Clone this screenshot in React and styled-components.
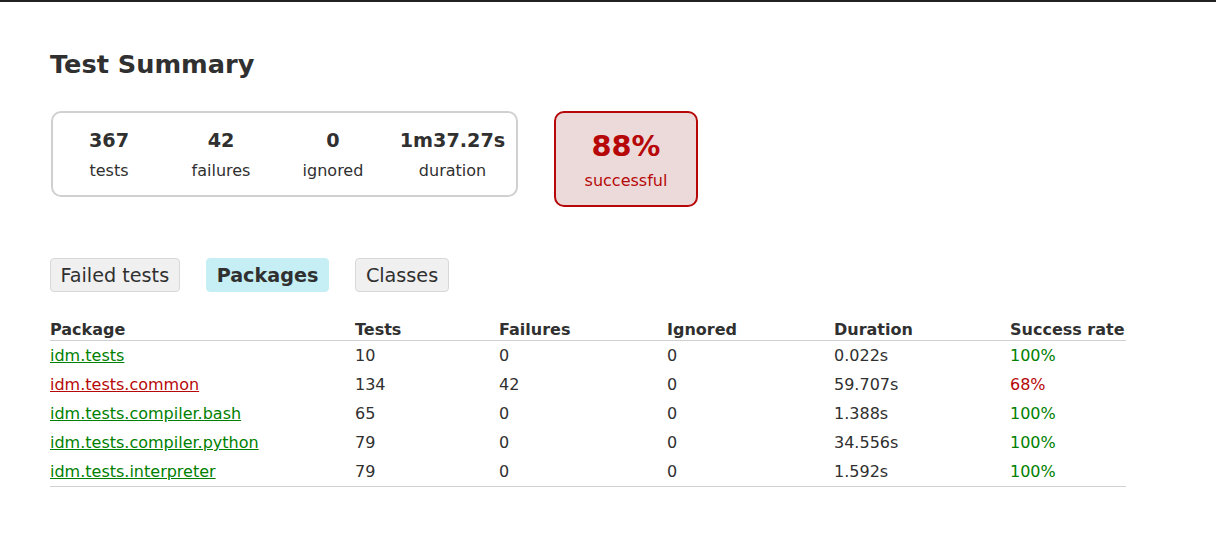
import styled, { createGlobalStyle } from 'styled-components';

const GlobalStyle = createGlobalStyle`
  html, body {
    margin: 0;
    padding: 0;
    background: #ffffff;
  }
  body {
    font-family: "DejaVu Sans", sans-serif;
    font-size: 16px;
    color: #303030;
  }
`;

const Page = styled.div`
  border-top: 2px solid #222222;
  padding: 30px 50px;
`;

const Title = styled.h1`
  font-size: 25.6px;
  font-weight: bold;
  margin: 17px 0 0;
  line-height: 30px;
`;

const SummaryRow = styled.div`
  display: flex;
  align-items: flex-start;
  margin: 32px 0 0 1px;
`;

const SummaryGroup = styled.div`
  display: flex;
  border: 2px solid #d0d0d0;
  border-radius: 10px;
`;

const InfoBox = styled.div`
  width: ${(p) => p.$width}px;
  padding: 17px 0 14px;
  text-align: center;
`;

const Counter = styled.p`
  margin: 0 0 10px;
  font-size: 19.2px;
  font-weight: bold;
  line-height: 22.4px;
`;

const Label = styled.p`
  margin: 0;
  line-height: 18.6px;
`;

const SuccessRate = styled.div`
  width: 140px;
  margin-left: 36px;
  padding: 17px 0 15px;
  text-align: center;
  border: 2px solid #b60808;
  border-radius: 10px;
  background: #ecdada;
  color: #b60808;
`;

const Percent = styled.p`
  margin: 0 0 8px;
  font-size: 28.8px;
  font-weight: bold;
  line-height: 33.5px;
`;

const Tabs = styled.div`
  display: flex;
  gap: 26px;
  margin-top: 51px;
`;

const Tab = styled.div`
  box-sizing: border-box;
  height: 34px;
  display: flex;
  align-items: center;
  padding: 0 ${(p) => (p.$active ? 10 : 9.5)}px;
  font-size: 19.2px;
  font-weight: ${(p) => (p.$active ? 'bold' : 'normal')};
  background: ${(p) => (p.$active ? '#c5eff4' : '#f0f0f0')};
  border: 1px solid ${(p) => (p.$active ? '#c5eff4' : '#d8d8d8')};
  border-radius: 4px;
`;

const Table = styled.table`
  border-collapse: collapse;
  margin-top: 28px;
  width: 1076px;
  table-layout: fixed;
  border-bottom: 1px solid #d0d0d0;
`;

const Th = styled.th`
  text-align: left;
  font-weight: bold;
  padding: 0 0 1px;
  line-height: 19px;
  border-bottom: 1px solid #d0d0d0;
`;

const Td = styled.td`
  padding: 5px 0;
  line-height: 19px;
  color: ${(p) => (p.$tone === 'ok' ? '#008000' : p.$tone === 'bad' ? '#b60808' : '#303030')};
`;

const PkgLink = styled.a`
  color: ${(p) => (p.$failed ? '#b60808' : '#008000')};
  text-decoration: underline;
`;

const columns = [
  ['Package', 305],
  ['Tests', 144],
  ['Failures', 168],
  ['Ignored', 167],
  ['Duration', 176],
  ['Success rate', 116],
];

const packages = [
  { name: 'idm.tests', tests: 10, failures: 0, ignored: 0, duration: '0.022s', rate: '100%' },
  { name: 'idm.tests.common', tests: 134, failures: 42, ignored: 0, duration: '59.707s', rate: '68%' },
  { name: 'idm.tests.compiler.bash', tests: 65, failures: 0, ignored: 0, duration: '1.388s', rate: '100%' },
  { name: 'idm.tests.compiler.python', tests: 79, failures: 0, ignored: 0, duration: '34.556s', rate: '100%' },
  { name: 'idm.tests.interpreter', tests: 79, failures: 0, ignored: 0, duration: '1.592s', rate: '100%' },
];

const summary = [
  ['367', 'tests', 112],
  ['42', 'failures', 112],
  ['0', 'ignored', 112],
  ['1m37.27s', 'duration', 127],
];

export default function App() {
  return (
    <Page>
      <GlobalStyle />
      <Title>Test Summary</Title>
      <SummaryRow>
        <SummaryGroup>
          {summary.map(([value, label, width]) => (
            <InfoBox key={label} $width={width}>
              <Counter>{value}</Counter>
              <Label>{label}</Label>
            </InfoBox>
          ))}
        </SummaryGroup>
        <SuccessRate>
          <Percent>88%</Percent>
          <Label>successful</Label>
        </SuccessRate>
      </SummaryRow>

      <Tabs>
        <Tab>Failed tests</Tab>
        <Tab $active>Packages</Tab>
        <Tab>Classes</Tab>
      </Tabs>

      <Table>
        <colgroup>
          {columns.map(([name, width]) => (
            <col key={name} style={{ width }} />
          ))}
        </colgroup>
        <thead>
          <tr>
            {columns.map(([name]) => (
              <Th key={name}>{name}</Th>
            ))}
          </tr>
        </thead>
        <tbody>
          {packages.map((p) => {
            const failed = p.failures > 0;
            return (
              <tr key={p.name}>
                <Td>
                  <PkgLink href="#" $failed={failed}>{p.name}</PkgLink>
                </Td>
                <Td>{p.tests}</Td>
                <Td>{p.failures}</Td>
                <Td>{p.ignored}</Td>
                <Td>{p.duration}</Td>
                <Td $tone={failed ? 'bad' : 'ok'}>{p.rate}</Td>
              </tr>
            );
          })}
        </tbody>
      </Table>
    </Page>
  );
}
